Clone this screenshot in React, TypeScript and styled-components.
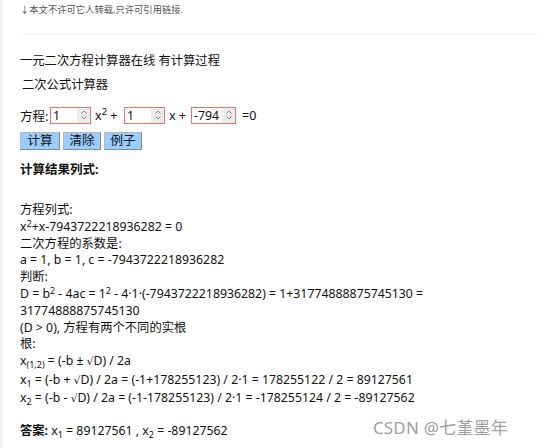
import React from "react";
import styled, { createGlobalStyle } from "styled-components";

const GlobalStyle = createGlobalStyle`
  html, body {
    margin: 0;
    padding: 0;
    background: #ffffff;
  }
  body {
    font-family: "Noto Sans", "Noto Sans CJK SC", sans-serif;
    color: #111;
  }
`;

const Page = styled.div`
  position: relative;
  width: 554px;
  height: 448px;
  box-sizing: border-box;
  padding: 3px 17px 0 17px;
  border-left: 3px solid #f4f4f4;
  overflow: hidden;
`;

const Notice = styled.div`
  font-size: 9.3px;
  line-height: 14px;
  color: #555;
`;

const Divider = styled.hr`
  border: 0;
  border-top: 1px solid #f3f3f3;
  margin: 17px 0 0 0;
  width: 520px;
`;

const Title = styled.div`
  font-size: 12.3px;
  line-height: 17px;
  margin-top: 17px;
`;

const SubTitle = styled.div`
  font-size: 12.3px;
  line-height: 17px;
  margin-top: 7px;
  padding-left: 2px;
`;

const EquationRow = styled.div`
  display: flex;
  align-items: center;
  font-size: 12.5px;
  margin-top: 13px;
  height: 18px;
  sup {
    font-size: 9.5px;
    line-height: 0;
  }
`;

const SpinBox = styled.div<{ $w: number }>`
  display: flex;
  flex: none;
  align-items: stretch;
  width: ${(p) => p.$w}px;
  height: 17px;
  box-sizing: border-box;
  border: 1px solid #ec7373;
  background: #fff;
`;

const SpinValue = styled.span`
  flex: 1;
  font-size: 12.3px;
  line-height: 15px;
  padding-left: 2px;
  overflow: hidden;
  white-space: nowrap;
`;

const SpinArrows = styled.span`
  width: 13px;
  background: #ececec;
  display: flex;
  align-items: center;
  justify-content: center;
`;

const Term = styled.span<{ $w: number; $l?: number }>`
  flex: none;
  box-sizing: border-box;
  width: ${(p) => p.$w}px;
  padding-left: ${(p) => p.$l ?? 0}px;
  white-space: pre;
  overflow: visible;
`;

const ButtonRow = styled.div`
  display: flex;
  gap: 3px;
  margin-top: 8px;
`;

const ActionButton = styled.button<{ $w: number }>`
  width: ${(p) => p.$w}px;
  height: 18px;
  padding: 0;
  font-family: inherit;
  font-size: 12.5px;
  line-height: 14px;
  color: #111;
  background: #99ccff;
  border: 1px solid #b8b8b8;
  border-right-color: #8a8a8a;
  border-bottom-color: #8a8a8a;
`;

const ResultHeader = styled.div`
  font-size: 12.5px;
  font-weight: bold;
  line-height: 17px;
  margin-top: 11px;
`;

const Steps = styled.div`
  margin-top: 24px;
  font-size: 12.3px;
  line-height: 16.8px;
  sup,
  sub {
    font-size: 9px;
    line-height: 0;
  }
  sup {
    vertical-align: 4px;
  }
`;

const Line = styled.div<{ $tall?: boolean }>`
  white-space: nowrap;
  height: ${(p) => (p.$tall ? 18.5 : 16.8)}px;
`;

const Root = styled.span`
  font-family: "DejaVu Sans", sans-serif;
  font-size: 10.5px;
`;

const Answer = styled.div`
  margin-top: 13px;
  font-size: 12.3px;
  line-height: 17px;
  sub {
    font-size: 9px;
    line-height: 0;
  }
`;

const Watermark = styled.div`
  position: absolute;
  right: 46px;
  bottom: 9px;
  font-size: 17px;
  color: #a0a0a0;
  letter-spacing: 0.2px;
`;

const Chevrons = () => (
  <svg width="8" height="12" viewBox="0 0 8 12">
    <path d="M1.5 4.5 L4 2 L6.5 4.5" fill="none" stroke="#8a8a8a" strokeWidth="1" />
    <path d="M1.5 7.5 L4 10 L6.5 7.5" fill="none" stroke="#8a8a8a" strokeWidth="1" />
  </svg>
);

const Spin = ({ value, width }: { value: string; width: number }) => (
  <SpinBox $w={width}>
    <SpinValue>{value}</SpinValue>
    <SpinArrows>
      <Chevrons />
    </SpinArrows>
  </SpinBox>
);

export default function App() {
  return (
    <Page>
      <GlobalStyle />
      <Notice>↓本文不许可它人转载,只许可引用链接.</Notice>
      <Divider />
      <Title>一元二次方程计算器在线 有计算过程</Title>
      <SubTitle>二次公式计算器</SubTitle>
      <EquationRow>
        <Term $w={30}>方程:</Term>
        <Spin value="1" width={41} />
        <Term $w={33} $l={4}>
          x<sup>2</sup> +
        </Term>
        <Spin value="1" width={41} />
        <Term $w={26} $l={4}>
          x +
        </Term>
        <Spin value="-794" width={45} />
        <Term $w={24} $l={6}>
          =0
        </Term>
      </EquationRow>
      <ButtonRow>
        <ActionButton $w={40}>计算</ActionButton>
        <ActionButton $w={38}>清除</ActionButton>
        <ActionButton $w={38}>例子</ActionButton>
      </ButtonRow>
      <ResultHeader>计算结果列式:</ResultHeader>
      <Steps>
        <Line>方程列式:</Line>
        <Line>
          x<sup>2</sup>+x-7943722218936282 = 0
        </Line>
        <Line>二次方程的系数是:</Line>
        <Line>a = 1, b = 1, c = -7943722218936282</Line>
        <Line>判断:</Line>
        <Line>
          D = b<sup>2</sup> - 4ac = 1<sup>2</sup> - 4·1·(-7943722218936282) = 1+31774888875745130 =
        </Line>
        <Line>31774888875745130</Line>
        <Line>(D &gt; 0), 方程有两个不同的实根</Line>
        <Line>根:</Line>
        <Line $tall>
          x<sub>(1,2)</sub> = (-b ± <Root>√</Root>D) / 2a
        </Line>
        <Line $tall>
          x<sub>1</sub> = (-b + <Root>√</Root>D) / 2a = (-1+178255123) / 2·1 = 178255122 / 2 = 89127561
        </Line>
        <Line $tall>
          x<sub>2</sub> = (-b - <Root>√</Root>D) / 2a = (-1-178255123) / 2·1 = -178255124 / 2 = -89127562
        </Line>
      </Steps>
      <Answer>
        <b>答案:</b> x<sub>1</sub> = 89127561 , x<sub>2</sub> = -89127562
      </Answer>
      <Watermark>CSDN @七堇墨年</Watermark>
    </Page>
  );
}
